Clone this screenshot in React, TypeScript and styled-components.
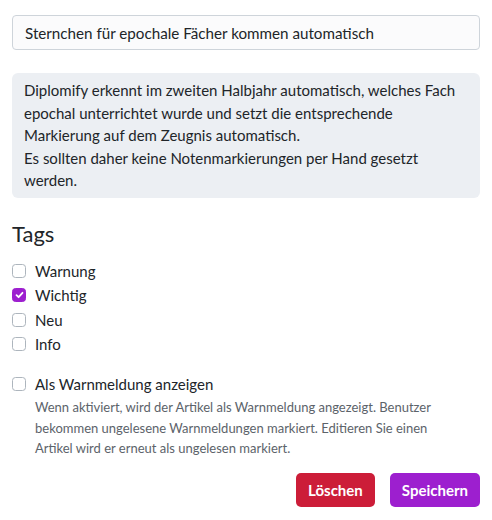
import React from "react";
import styled, {createGlobalStyle} from "styled-components";

const GlobalStyle = createGlobalStyle`
  body {
    margin: 0;
    background: #ffffff;
    font-family: Lato, "Noto Sans", sans-serif;
    color: #212529;
  }
`

const Page = styled.div`
  display: flex;
  flex-direction: column;
  padding: 15px 12px 13px 12px;
`

const TitleInput = styled.input`
  height: 35px;
  box-sizing: border-box;
  padding: 0 12px;
  border: 1px solid #ced4da;
  border-radius: 4px;
  background: #fbfbfc;
  font-family: inherit;
  font-size: 15.2px;
  color: #212529;
  outline: none;
`

const Info = styled.div`
  margin-top: 23px;
  padding: 6px 12px 6px 12px;
  background: #eceff3;
  border-radius: 6px;
  font-size: 15px;
  line-height: 22.5px;
`

const Heading = styled.h4`
  margin: 22px 0 11px 0;
  font-size: 22px;
  font-weight: 400;
  line-height: 28px;
`

const CheckList = styled.div`
  display: flex;
  flex-direction: column;
`

const CheckRow = styled.label<{ $gap?: number }>`
  display: flex;
  align-items: center;
  column-gap: 9px;
  height: 24.5px;
  font-size: 15px;
  margin-top: ${p => p.$gap ?? 0}px;
`

const Box = styled.span<{ $checked?: boolean }>`
  display: flex;
  align-items: center;
  justify-content: center;
  width: 14px;
  height: 14px;
  box-sizing: border-box;
  border-radius: 3.5px;
  border: 1px solid ${p => (p.$checked ? "#9d1fcf" : "#adb5bd")};
  background: ${p => (p.$checked ? "#9d1fcf" : "#ffffff")};
`

const Hint = styled.div`
  max-width: 420px;
  margin: 1px 0 0 23px;
  font-size: 13px;
  line-height: 20.5px;
  color: #5c636a;
`

const Actions = styled.div`
  display: flex;
  justify-content: flex-end;
  column-gap: 15px;
  margin-top: 14px;
`

const Button = styled.button<{ $color: string }>`
  height: 34px;
  padding: 0 12px;
  border: none;
  border-radius: 5px;
  background: ${p => p.$color};
  color: #ffffff;
  font-family: inherit;
  font-size: 15px;
  font-weight: 700;
  cursor: pointer;
`

const Check = () => (
    <svg width="9" height="8" viewBox="0 0 9 8">
        <path d="M1.5 4.2 L3.6 6.2 L7.5 1.8" stroke="#fff" strokeWidth="1.8" fill="none"
              strokeLinecap="round" strokeLinejoin="round"/>
    </svg>
)

const tags = [
    {label: "Warnung", checked: false},
    {label: "Wichtig", checked: true},
    {label: "Neu", checked: false},
    {label: "Info", checked: false},
]

export default function App() {
    return (
        <>
            <GlobalStyle/>
            <Page>
                <TitleInput type="text" defaultValue="Sternchen für epochale Fächer kommen automatisch"/>
                <Info>
                    Diplomify erkennt im zweiten Halbjahr automatisch, welches Fach epochal unterrichtet wurde und
                    setzt die entsprechende Markierung auf dem Zeugnis automatisch.
                    <br/>
                    Es sollten daher keine Notenmarkierungen per Hand gesetzt werden.
                </Info>
                <Heading>Tags</Heading>
                <CheckList>
                    {tags.map(t => (
                        <CheckRow key={t.label}>
                            <Box $checked={t.checked}>{t.checked && <Check/>}</Box>
                            {t.label}
                        </CheckRow>
                    ))}
                    <CheckRow $gap={15}>
                        <Box/>
                        Als Warnmeldung anzeigen
                    </CheckRow>
                </CheckList>
                <Hint>
                    Wenn aktiviert, wird der Artikel als Warnmeldung angezeigt. Benutzer bekommen ungelesene
                    Warnmeldungen markiert. Editieren Sie einen Artikel wird er erneut als ungelesen markiert.
                </Hint>
                <Actions>
                    <Button $color="#cc1d38">Löschen</Button>
                    <Button $color="#9d1fcf">Speichern</Button>
                </Actions>
            </Page>
        </>
    )
}
